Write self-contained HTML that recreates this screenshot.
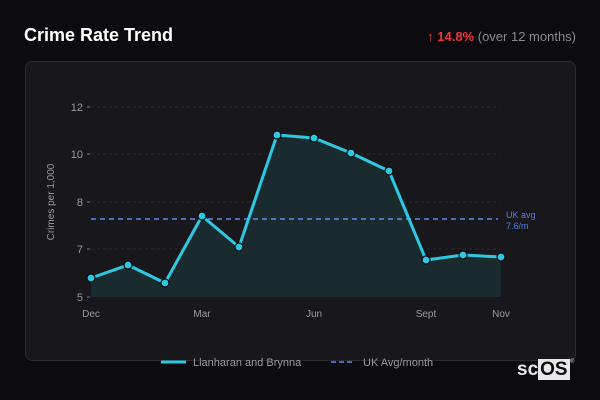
<!DOCTYPE html>
<html><head><meta charset="utf-8"><style>
html,body{margin:0;padding:0;background:#0c0b0f;width:600px;height:400px;overflow:hidden;font-family:"Liberation Sans","DejaVu Sans",sans-serif}
.title{position:absolute;left:24px;top:25px;color:#fff;font-weight:bold;font-size:18px}
.chg{position:absolute;right:24px;top:29px;font-size:13px;color:#8a8a8e}
.chg b{color:#e8383d}
.card{position:absolute;left:25px;top:61px;width:549px;height:298px;background:#18181c;border:1px solid #2a2a2f;border-radius:7px}
svg{position:absolute;left:0;top:0}
.logo{position:absolute;left:517px;top:359px;font-size:19px;font-weight:bold;color:#e8e8e8;letter-spacing:0}
.logo span{background:#e8e8e8;color:#0c0b0f;padding:0 2px}
</style></head><body>
<div class="title">Crime Rate Trend</div>
<div class="chg"><b>↑ 14.8%</b> (over 12 months)</div>
<div class="card"></div>
<svg width="600" height="400" font-family="Liberation Sans, DejaVu Sans, sans-serif">
<g stroke="#2b2b30" stroke-dasharray="3,3" stroke-width="1">
<line x1="91" y1="107" x2="500" y2="107"/><line x1="91" y1="154" x2="500" y2="154"/><line x1="91" y1="202" x2="500" y2="202"/><line x1="91" y1="249" x2="500" y2="249"/>
</g>
<g stroke="#777" stroke-width="1"><line x1="87" y1="107" x2="90" y2="107"/><line x1="87" y1="154" x2="90" y2="154"/><line x1="87" y1="202" x2="90" y2="202"/><line x1="87" y1="249" x2="90" y2="249"/><line x1="87" y1="297" x2="90" y2="297"/></g>
<g fill="#9a9a9e" font-size="11" text-anchor="end"><text x="83" y="111">12</text><text x="83" y="158">10</text><text x="83" y="206">8</text><text x="83" y="253">7</text><text x="83" y="301">5</text></g>
<text transform="translate(54,202) rotate(-90)" fill="#9a9a9e" font-size="10" text-anchor="middle">Crimes per 1,000</text>
<g fill="#9a9a9e" font-size="10" text-anchor="middle"><text x="91" y="317">Dec</text><text x="202" y="317">Mar</text><text x="314" y="317">Jun</text><text x="426" y="317">Sept</text><text x="501" y="317">Nov</text></g>
<path d="M91,278 L128,265 L165,283 L202,216 L239,247 L277,135 L314,138 L351,153 L389,171 L426,260 L463,255 L501,257 L501,297 L91,297Z" fill="#1a2b30"/>
<line x1="91" y1="219" x2="498" y2="219" stroke="#5b8ef0" stroke-width="1.5" stroke-dasharray="5,4"/>
<text x="506" y="218" fill="#4f7fe0" font-size="9">UK avg</text><text x="506" y="229" fill="#4f7fe0" font-size="9">7.6/m</text>
<path d="M91,278 L128,265 L165,283 L202,216 L239,247 L277,135 L314,138 L351,153 L389,171 L426,260 L463,255 L501,257" fill="none" stroke="#2ec8e0" stroke-width="3" stroke-linejoin="round"/>
<g fill="#2ec8e0" stroke="#0c0c0f" stroke-width="1.2">
<circle cx="91" cy="278" r="4"/><circle cx="128" cy="265" r="4"/><circle cx="165" cy="283" r="4"/><circle cx="202" cy="216" r="4"/><circle cx="239" cy="247" r="4"/><circle cx="277" cy="135" r="4"/><circle cx="314" cy="138" r="4"/><circle cx="351" cy="153" r="4"/><circle cx="389" cy="171" r="4"/><circle cx="426" cy="260" r="4"/><circle cx="463" cy="255" r="4"/><circle cx="501" cy="257" r="4"/>
</g>
<line x1="161" y1="362" x2="186" y2="362" stroke="#2ec8e0" stroke-width="3"/>
<text x="193" y="366" fill="#9a9a9e" font-size="11">Llanharan and Brynna</text>
<line x1="331" y1="362" x2="355" y2="362" stroke="#5b8ef0" stroke-width="1.5" stroke-dasharray="5,3"/>
<text x="363" y="366" fill="#9a9a9e" font-size="11">UK Avg/month</text>
<text x="570" y="363" fill="#ccc" font-size="6">®</text>
</svg>
<div class="logo">sc<span>OS</span></div>
</body></html>
